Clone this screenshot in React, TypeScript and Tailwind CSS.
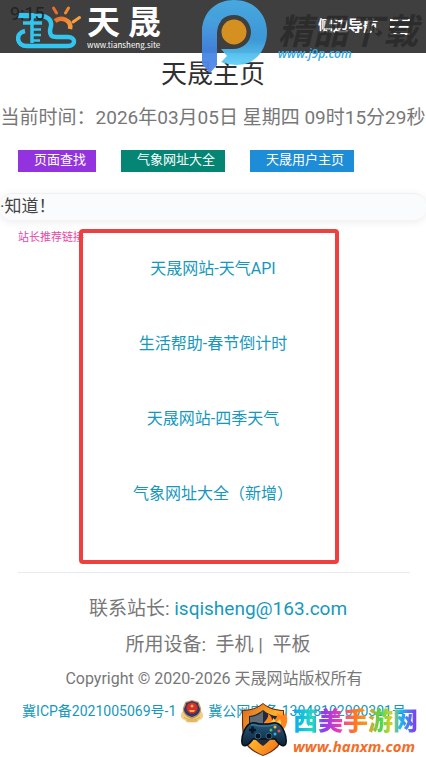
const buttons = [
  { label: '页面查找', color: 'bg-[#9333e0]' },
  { label: '气象网址大全', color: 'bg-[#058675]' },
  { label: '天晟用户主页', color: 'bg-[#1c8dd6]' },
];

const links = ['天晟网站-天气API', '生活帮助-春节倒计时', '天晟网站-四季天气', '气象网址大全（新增）'];

const CloudLogo = () => (
  <svg width="66" height="44" viewBox="17 4 66 44" fill="none" aria-hidden="true">
    <defs>
      <linearGradient id="sun" x1="0" y1="0" x2="1" y2="1">
        <stop offset="0" stopColor="#ea6f2a" />
        <stop offset="1" stopColor="#f6a13c" />
      </linearGradient>
    </defs>
    <path d="M56 20c6-5 17-1 15 8" stroke="url(#sun)" strokeWidth="4.5" />
    <g strokeWidth="3" strokeLinecap="round">
      <path d="m57.5 12-3-5" stroke="#ea6f2a" />
      <path d="m66.500 12 3-5" stroke="#f08a32" />
      <path d="m74 21 6.500-4.500" stroke="#f6a13c" />
    </g>
    <g stroke="#32c5ef">
      <path
        d="M24 15h18c6 0 11 4 10 10-1 4-2 6 0 9 1 2 3 2 6 2h11c8 0 8 9 0 9H28c-11 0-12-13-2-15"
        strokeWidth="4.500"
        strokeLinejoin="round"
      />
      <path d="M18 14.500h17" strokeWidth="5" />
      <path d="M33 15v27M24 22h19" strokeWidth="3.500" />
      <path d="M34 28.500h8M34 34h8M34 39.500h7" strokeWidth="2.500" />
    </g>
  </svg>
);

const PLogo = () => (
  <svg width="68" height="74" viewBox="0 0 68 74" aria-hidden="true">
    <defs>
      <linearGradient id="pRing" x1="0" y1="0" x2="0" y2="1">
        <stop offset="0" stopColor="#4aaee8" />
        <stop offset=".6" stopColor="#3c9ddf" />
        <stop offset="1" stopColor="#62d3f8" />
      </linearGradient>
      <linearGradient id="pStem" x1="0" y1="0" x2="0" y2="1">
        <stop offset="0" stopColor="#49ace7" />
        <stop offset=".6" stopColor="#4285e2" />
        <stop offset="1" stopColor="#5588ea" />
      </linearGradient>
    </defs>
    <path
      d="M33 0c20 0 33 14 33 32S54 65 36 65c-5 0-10-1-16-3l6-6-6-7h12c10 0 18-7 18-17S42 15 33 15 17 20 16 32L1 30C2 12 15 0 33 0z"
      fill="url(#pRing)"
    />
    <path d="M1 30c1-6 3-11 6-15l13 6c-3 4-4 7-4 11v33l-7 8-8-9z" fill="url(#pStem)" />
    <circle cx="33" cy="32" r="12.5" fill="#dc9620" />
  </svg>
);

const PoliceBadge = () => (
  <svg width="24" height="26" viewBox="0 0 24 26" aria-hidden="true">
    <path d="M3 13c-3 3-3 8 2 9 1 3 4 3 7 2 3 1 6 1 7-2 5-1 5-6 2-9z" fill="#efcf86" />
    <path d="M12 2 5 4c0 3-3 5-2 9 1 4 5 7 9 8 4-1 8-4 9-8 1-4-2-6-2-9z" fill="#c79855" />
    <path d="m12 3-6 2c0 3-2 4-2 7 1 4 4 6 8 7 4-1 7-3 8-7 0-3-2-4-2-7z" fill="#343a66" />
    <circle cx="12" cy="10" r="5.5" fill="#d92d2a" />
    <circle cx="12" cy="8" r="1.5" fill="#f3b04a" />
    <path d="M9 12h6l-1 2h-4z" fill="#f3b04a" />
    <path d="M4 19c5 4 11 4 16 0M7 22c3 2 7 2 10 0" stroke="#dca94f" fill="none" />
  </svg>
);

const GamepadShield = () => (
  <svg width="50" height="54" viewBox="0 0 50 54" aria-hidden="true">
    <defs>
      <linearGradient id="fire" x1="0" y1="0" x2="1" y2="1">
        <stop offset="0" stopColor="#d9671f" />
        <stop offset=".5" stopColor="#ffb02b" />
        <stop offset="1" stopColor="#ee6415" />
      </linearGradient>
      <linearGradient id="pad" x1="0" y1="0" x2="0" y2="1">
        <stop offset="0" stopColor="#27597a" />
        <stop offset="1" stopColor="#0d2338" />
      </linearGradient>
    </defs>
    <path d="M24 0c6 5 14 7 21 7 0 16 1 28-6 37-4 4-9 7-15 9-6-2-11-5-15-9C2 35 3 23 3 7c8 0 15-2 21-7z" fill="#6b2c12" />
    <path d="M24 1c6 5 13 7 20 7 0 15 0 27-6 35-4 4-8 7-14 9-6-2-10-5-14-9C4 35 4 24 4 8c7 0 14-2 20-7z" fill="url(#fire)" />
    <path d="M24 7c5 4 10 6 14 6 0 12 0 20-14 30C10 33 10 25 10 13c4 0 9-2 14-6z" fill="#202a38" />
    <path d="M24 8v16H12c-1-3-1-7-1-10 4 0 9-2 13-6z" fill="#5f6c78" />
    <path d="M24 24c0-7 6-7 5-13 4 2 4 5 4 7 4-1 6-5 5-8 5 5 9 2 8-2 4 8 2 14-1 18z" fill="#ff8420" />
    <path d="M30 23c-1-4 4-4 4-8 3 2 2 4 3 5l4-4c2 4 1 7-1 9z" fill="#ffd04b" />
    <path
      d="M13 20c3-1 5 1 8 1h8c3 0 5-2 8-1 7 1 11 14 10 20-1 5-6 3-11-4H14c-5 7-10 9-11 4-1-6 3-19 10-20z"
      fill="url(#pad)"
      stroke="#07111d"
      strokeWidth="1.5"
    />
    <path d="M12 22c4-1 5 1 9 1h8c4 0 6-2 9-1" stroke="#3f88b4" fill="none" />
    <path d="M10 27h7M13.5 23.500v7" stroke="#071421" strokeWidth="2.500" />
    <circle cx="19" cy="33" r="3" fill="#081421" stroke="#33688b" />
    <circle cx="30" cy="33" r="3" fill="#081421" stroke="#33688b" />
    <circle cx="36" cy="24" r="1.5" fill="#f9b934" />
    <circle cx="40" cy="28" r="1.5" fill="#ee5548" />
    <circle cx="36" cy="31" r="1.5" fill="#36aef0" />
    <circle cx="32" cy="27" r="1.5" fill="#53c05c" />
  </svg>
);

const Header = () => (
  <header className="relative flex h-[53px] items-center justify-between bg-[#3f3f3f] px-4">
    <a href="#home" className="flex items-center gap-[5px]">
      <CloudLogo />
      <span className="flex flex-col pt-1 text-white">
        <span className="flex gap-2 text-[33px] leading-8 font-bold">
          <span>天</span>
          <span>晟</span>
        </span>
        <span className="font-['Noto_Sans_CJK_SC',sans-serif] text-[8px] leading-3">www.tiansheng.site</span>
      </span>
    </a>
    <button type="button" className="flex items-center gap-3 text-[15px] font-bold text-white">
      侧边导航
      <svg width="20" height="18" viewBox="0 0 20 18" stroke="currentColor" strokeWidth="2" aria-hidden="true">
        <path d="M0 2h20M0 9h20M0 16h20" />
      </svg>
    </button>

    <span className="absolute top-1 left-[10px] font-['Roboto',sans-serif] text-lg leading-5 text-[#222]">9:15</span>
    <div className="pointer-events-none absolute top-0 left-[201px] opacity-95">
      <PLogo />
    </div>
    <p className="pointer-events-none absolute top-3 left-[278px] text-[35px] leading-[42px] font-bold whitespace-nowrap text-[#292929]/85 italic">
      精品下载
    </p>
    <p className="pointer-events-none absolute top-[46px] left-[278px] font-['Open_Sans',sans-serif] text-xs leading-4 font-semibold text-[#38abe4] italic">
      www.j9p.com
    </p>
  </header>
);

const Footer = () => (
  <footer className="mr-4 ml-[18px] border-t border-[#e8eaec] pt-5 text-center text-[19px] leading-8 text-[#777]">
    <p className="pl-2">
      联系站长:{' '}
      <a href="mailto:isqisheng@163.com" className="text-[#1698bd]">
        isqisheng@163.com
      </a>
    </p>
    <p className="mt-1 pl-2 whitespace-pre">所用设备:  手机 |  平板</p>
    <p className="mt-0.5 text-base leading-8">Copyright © 2020-2026 天晟网站版权所有</p>
    <p className="mt-0.5 flex items-center justify-center gap-1 text-sm leading-7 whitespace-nowrap text-[#1698bd]">
      <a href="#icp">冀ICP备2021005069号-1</a>
      <PoliceBadge />
      <a href="#police">冀公网安备 13048102000301号</a>
    </p>
  </footer>
);

export default function App() {
  return (
    <div className="relative overflow-hidden bg-white pb-8 font-['Roboto','Noto_Sans_CJK_SC',sans-serif]">
      <Header />

      <main>
        <h1 className="mt-px text-center text-[26px] leading-10 text-[#303030]">天晟主页</h1>
        <p className="mt-2 text-center text-[19px] leading-8 whitespace-nowrap text-[#777]">
          当前时间：2026年03月05日 星期四 09时15分29秒
        </p>

        <nav className="mt-4 flex gap-[25px] px-[18px]">
          {buttons.map((button) => (
            <button
              key={button.label}
              type="button"
              className={`h-[22px] pr-[10px] pb-[2px] pl-4 text-[13px] leading-5 whitespace-nowrap text-white ${button.color}`}
            >
              {button.label}
            </button>
          ))}
        </nav>

        <div className="mt-[21px] h-[27px] rounded-xl border-t border-[#eef1f3] bg-[#f9fbfc] text-[17px] leading-6 text-[#444] shadow-[0_2px_8px_rgba(0,0,0,0.08)]">
          <p>·知道！</p>
        </div>

        <h2 className="mt-[10px] pl-[18px] text-[11px] leading-4 text-[#e748a7]">站长推荐链接</h2>

        <section className="relative mx-auto -mt-[17px] mb-2 flex w-[61%] -translate-x-1 flex-col items-center rounded border-4 border-[#ef4040] pt-6 pb-[54px] pl-2">
          <ul className="flex flex-col items-center gap-[51px] text-base leading-6 text-[#1698bd]">
            {links.map((link) => (
              <li key={link} className="whitespace-nowrap">
                <a href="#links">{link}</a>
              </li>
            ))}
          </ul>
        </section>
      </main>

      <Footer />

      <div className="pointer-events-none absolute right-2 bottom-0 flex items-center gap-1">
        <GamepadShield />
        <div className="flex flex-col pt-1 whitespace-nowrap">
          <p className="bg-[linear-gradient(90deg,#08aaf0_0%,#20dcc0_16%,#8a3cf0_24%,#f03cb0_38%,#ff7a20_50%,#f2a020_60%,#48d850_70%,#d8d020_78%,#20b8f0_86%,#8a2cf0_100%)] bg-clip-text text-[25px] leading-7 font-black text-transparent">
            西美手游网
          </p>
          <p className="font-['Open_Sans',sans-serif] text-[15px] leading-5 font-bold text-[#f36d27] italic">www.hanxm.com</p>
        </div>
      </div>
    </div>
  );
}
